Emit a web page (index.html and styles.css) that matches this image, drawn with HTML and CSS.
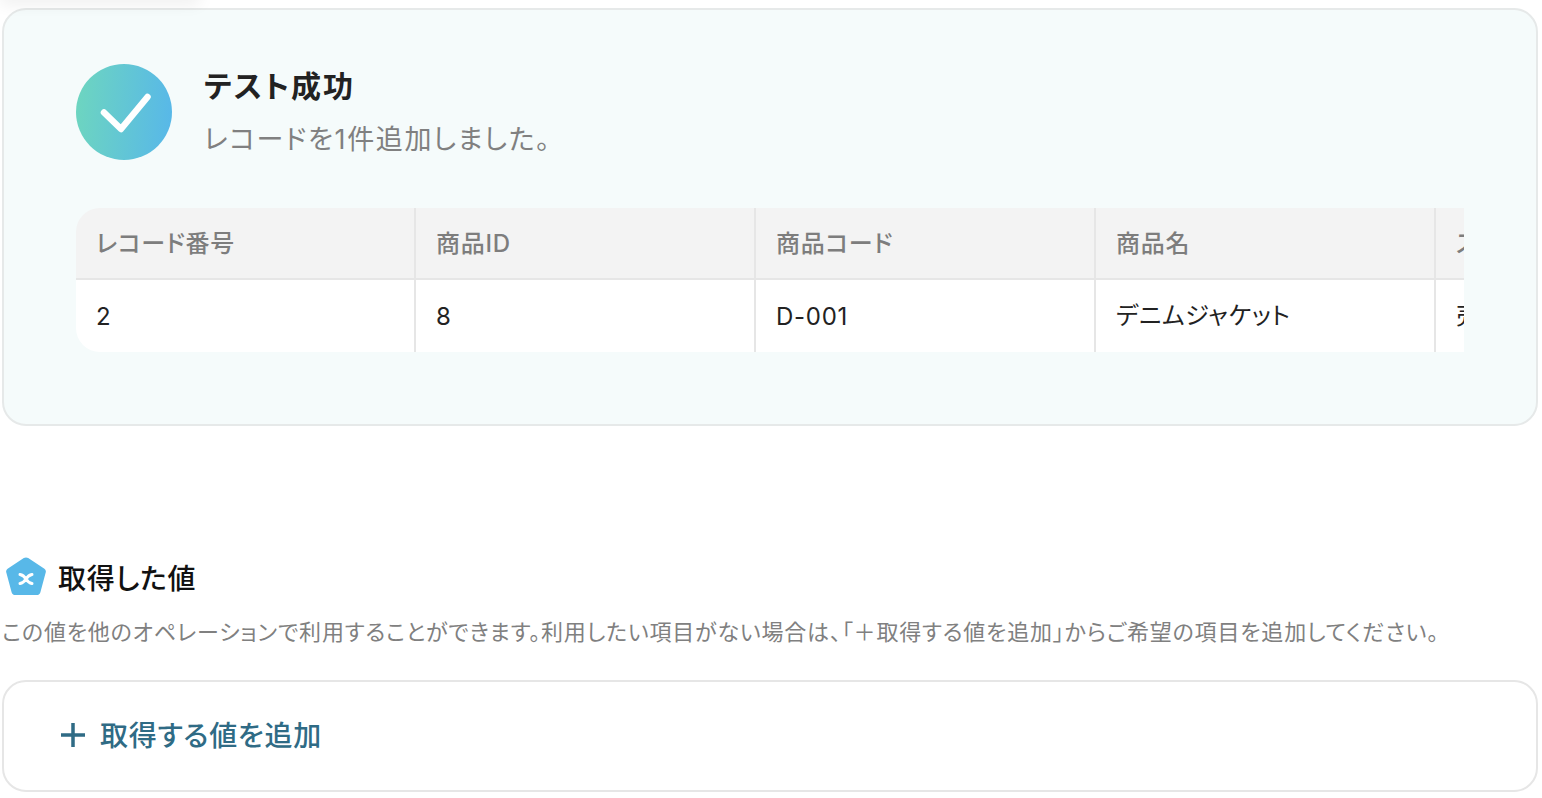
FILE: index.html
```html
<!DOCTYPE html>
<html lang="ja">
<head>
  <title>テスト成功</title>
  <link rel="stylesheet" href="styles.css">
</head>
<body>
  <div class="top-shadow"></div>

  <section class="result-card">
    <div class="result-head">
      <svg class="check-icon" width="96" height="96" viewBox="0 0 96 96">
        <defs>
          <linearGradient id="check-bg" x1="0" y1="0.46" x2="1" y2="0.54">
            <stop offset="0" stop-color="#6dd5c0"/>
            <stop offset="1" stop-color="#58b8e8"/>
          </linearGradient>
        </defs>
        <circle cx="48" cy="48" r="48" fill="url(#check-bg)"/>
        <path d="M28 48.500 L45 65 L71.500 33" fill="none" stroke="#fff" stroke-width="6.500" stroke-linecap="round" stroke-linejoin="round"/>
      </svg>
      <div>
        <h2 class="result-title">テスト成功</h2>
        <p class="result-text">レコードを1件追加しました。</p>
      </div>
    </div>

    <div class="table-wrap">
      <table class="record-table">
        <thead>
          <tr>
            <th>レコード番号</th>
            <th>商品ID</th>
            <th>商品コード</th>
            <th>商品名</th>
            <th>ステータス</th>
          </tr>
        </thead>
        <tbody>
          <tr>
            <td class="num-cell">2</td>
            <td class="num-cell">8</td>
            <td class="num-cell">D-001</td>
            <td>デニムジャケット</td>
            <td>売上</td>
          </tr>
        </tbody>
      </table>
    </div>
  </section>

  <div class="values-head">
    <svg class="value-icon" width="40" height="40" viewBox="0 0 40 40">
      <path d="M17.800 1 Q20 -0.200 22.200 1 L38.400 11.800 Q40.400 13.200 39.700 15.600 L34.400 35.200 Q33.600 38 30.800 38 L9.200 38 Q6.400 38 5.600 35.200 L0.300 15.600 Q-0.400 13.200 1.600 11.800 Z" fill="#58b8e8"/>
      <path d="M14 17.500 Q17.500 18 20 22 Q22.500 26 26 26.500 M26 17.500 Q22.500 18 20 22 Q17.500 26 14 26.500" fill="none" stroke="#fff" stroke-width="3" stroke-linecap="round"/>
    </svg>
    <h3 class="values-title">取得した値</h3>
  </div>
  <p class="values-text">この値を他のオペレーションで利用することができます。利用したい項目がない場合は、「＋取得する値を追加」からご希望の項目を追加してください。</p>

  <div class="add-card">
    <svg class="plus-icon" width="26" height="26" viewBox="0 0 26 26">
      <path d="M13 1 V25 M1 13 H25" fill="none" stroke="#2f6b85" stroke-width="3.500"/>
    </svg>
    <span class="add-label">取得する値を追加</span>
  </div>
</body>
</html>
```

FILE: styles.css
```css
html,
body {
  height: 100%;
}

body {
  margin: 0;
  padding: 8px 4px 0 2px;
  box-sizing: border-box;
  position: relative;
  overflow: hidden;
  background-color: #fff;
  font-family: Inter, "Noto Sans CJK JP", sans-serif;
  font-feature-settings: "palt";
}

.top-shadow {
  position: absolute;
  top: -14px;
  left: 0;
  width: 200px;
  height: 14px;
  box-shadow: 0 4px 16px rgba(0, 0, 0, 0.07);
}

.result-card {
  height: 418px;
  box-sizing: border-box;
  padding: 54px 72px 0;
  background-color: #f5fbfb;
  border: 2px solid #e6e9e9;
  border-radius: 24px;
}

.result-head {
  display: flex;
  gap: 32px;
  margin-bottom: 48px;
}

.check-icon {
  display: block;
}

.result-title {
  margin: 2px 0 0;
  font-size: 30px;
  line-height: 40px;
  font-weight: 700;
  letter-spacing: 2px;
  color: #222;
}

.result-text {
  margin: 16px 0 0;
  font-size: 27px;
  line-height: 36px;
  letter-spacing: 1.65px;
  color: #808080;
}

.table-wrap {
  overflow: hidden;
  border-radius: 24px 0 0 24px;
}

.record-table {
  width: 1700px;
  table-layout: fixed;
  border-collapse: separate;
  border-spacing: 0;
}

.record-table th,
.record-table td {
  padding: 0 20px;
  text-align: left;
  box-sizing: border-box;
  border-right: 2px solid #e6e6e6;
  font-size: 24px;
  letter-spacing: 0.72px;
}

.record-table th {
  height: 72px;
  padding-bottom: 4px;
  background-color: #f3f3f3;
  border-bottom: 2px solid #e6e6e6;
  font-weight: 500;
  color: #7d7d7d;
}

.record-table td {
  height: 72px;
  padding-bottom: 5px;
  background-color: #fff;
  font-weight: 400;
  color: #222;
}

.record-table .num-cell {
  padding-top: 1px;
  padding-bottom: 0;
}

.values-head {
  display: flex;
  align-items: flex-start;
  gap: 12px;
  margin: 129px 0 0 4px;
}

.value-icon {
  display: block;
  margin-top: 2px;
}

.values-title {
  margin: 0;
  padding-top: 4px;
  font-size: 28px;
  line-height: 40px;
  font-weight: 500;
  letter-spacing: 0.8px;
  color: #111;
}

.values-text {
  margin: 18px 0 0;
  font-size: 22px;
  line-height: 30px;
  letter-spacing: 0.82px;
  color: #808080;
  white-space: nowrap;
}

.add-card {
  display: flex;
  align-items: center;
  gap: 14px;
  height: 112px;
  box-sizing: border-box;
  margin-top: 33px;
  padding: 0 56px 2px;
  background-color: #fff;
  border: 2px solid #e6e6e6;
  border-radius: 24px;
}

.plus-icon {
  display: block;
}

.add-label {
  margin-bottom: 2px;
  font-size: 28px;
  font-weight: 500;
  letter-spacing: 0.7px;
  color: #2f6b85;
}
```
